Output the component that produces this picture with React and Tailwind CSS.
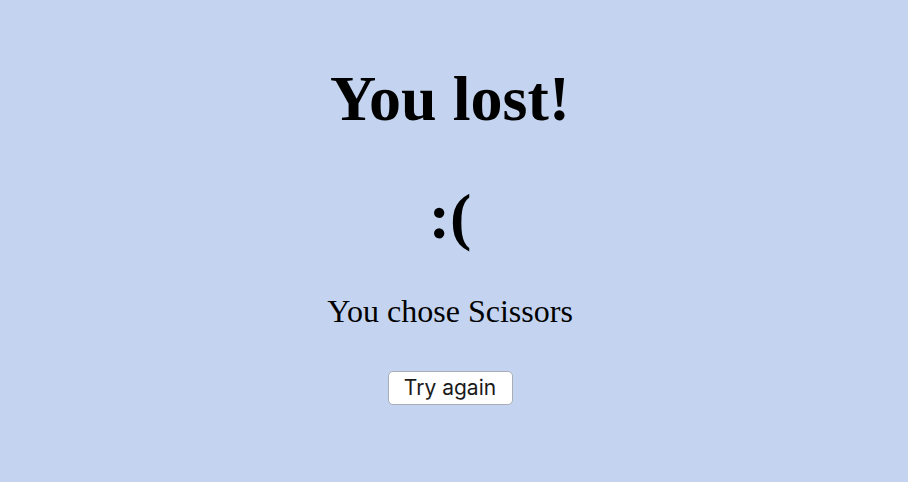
export default function App() {
  return (
    <div className="min-h-screen w-full bg-[#c4d4f0] flex flex-col items-center pr-2 text-black" style={{ fontFamily: '"Liberation Serif", serif' }}>
      <h1 className="mt-[59px] text-[64px] leading-[80px] font-bold">You lost!</h1>
      <div className="mt-[38px] text-[64px] leading-[80px] font-bold">:(</div>
      <p className="mt-[34px] text-[32px] leading-[40px]">You chose Scissors</p>
      <button className="mt-[40px] w-[125px] h-[34px] bg-white border border-[#a9adb5] rounded-[5px] text-[21px] text-[#1a1a1a] font-['Inter',sans-serif]">
        Try again
      </button>
    </div>
  )
}
